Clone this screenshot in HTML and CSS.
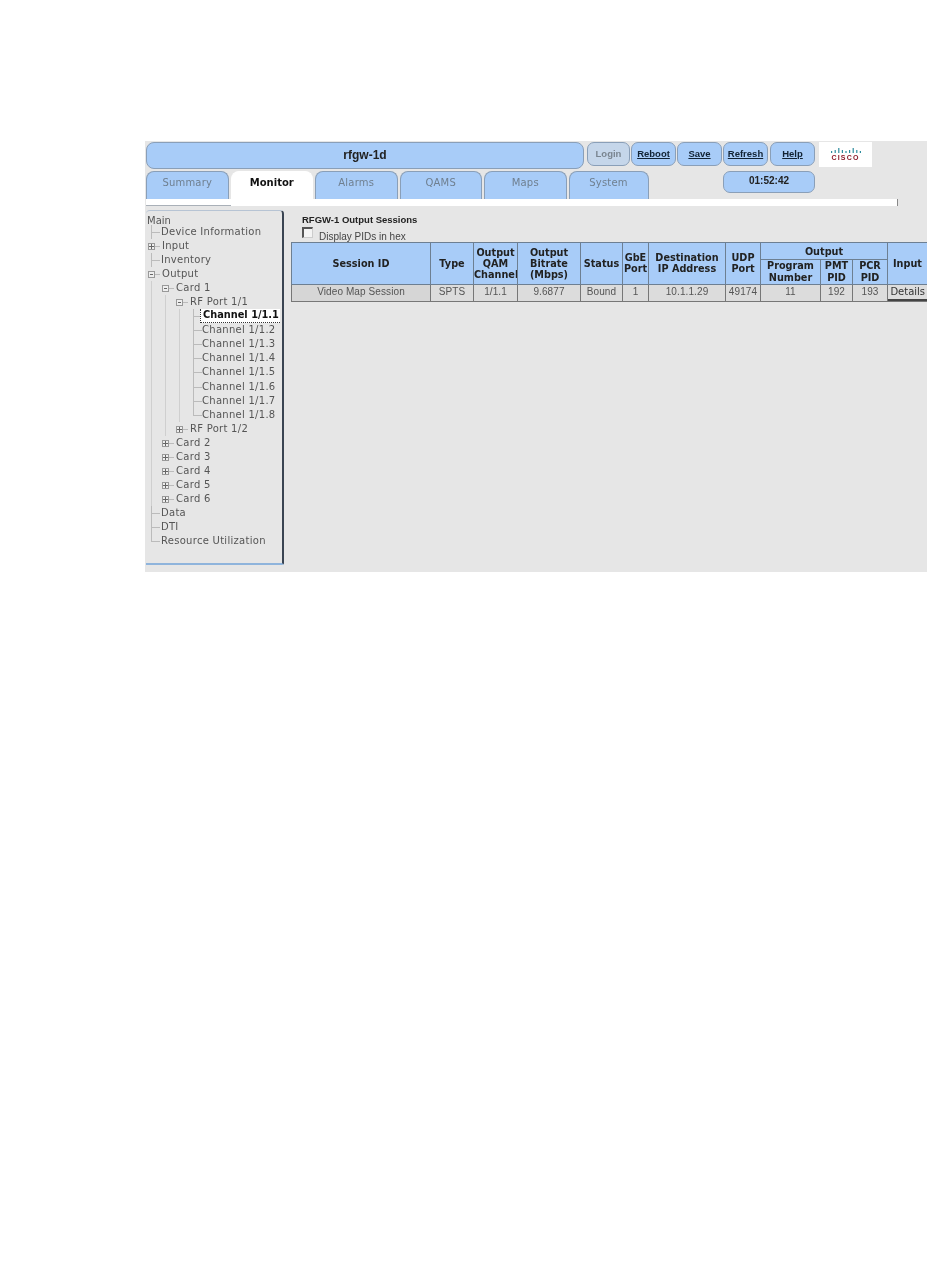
FILE: index.html
```html
<!DOCTYPE html>
<html>
<head>
<meta charset="utf-8">
<title>rfgw-1d</title>
<link rel="stylesheet" href="styles.css">
</head>
<body>
<div class="panel">
  <div class="top">
    <div class="title">rfgw-1d</div>
    <div class="btns">
      <a class="btn off">Login</a><a class="btn">Reboot</a><a class="btn">Save</a><a class="btn">Refresh</a><a class="btn">Help</a>
    </div>
    <div class="logo">
      <svg width="32" height="7" viewBox="0 0 32 7" class="bars">
        <g fill="#2d8c9e"><rect x="1" y="4" width="1.2" height="2"/><rect x="4.6" y="3" width="1.2" height="3"/><rect x="8.2" y="1" width="1.2" height="5"/><rect x="11.8" y="3" width="1.2" height="3"/><rect x="15.4" y="4" width="1.2" height="2"/><rect x="19" y="3" width="1.2" height="3"/><rect x="22.6" y="1" width="1.2" height="5"/><rect x="26.2" y="3" width="1.2" height="3"/><rect x="29.8" y="4" width="1.2" height="2"/></g>
      </svg>
      <span class="cisco">CISCO</span>
    </div>
  </div>
  <div class="second">
    <div class="tabs">
      <div class="tab">Summary</div><div class="tab on">Monitor</div><div class="tab">Alarms</div><div class="tab">QAMS</div><div class="tab">Maps</div><div class="tab sys">System</div>
    </div>
    <div class="clock">01:52:42</div>
  </div>
  <div class="strip"><div class="strip-white"></div><div class="tick"></div></div>
  <div class="main">
    <div class="tree">
      <div class="row first"><span class="t root">Main</span></div>
      <div class="row"><i class="e"></i><span class="t top-item">Device Information</span></div>
      <div class="row"><i class="p"></i><span class="t x">Input</span></div>
      <div class="row"><i class="e"></i><span class="t top-item">Inventory</span></div>
      <div class="row"><i class="m"></i><span class="t x">Output</span></div>
      <div class="row"><i class="g"></i><i class="m"></i><span class="t x">Card 1</span></div>
      <div class="row"><i class="g"></i><i class="g"></i><i class="m"></i><span class="t x">RF Port 1/1</span></div>
      <div class="row"><i class="g"></i><i class="g"></i><i class="g"></i><i class="e"></i><span class="t sel">Channel 1/1.1</span></div>
      <div class="row"><i class="g"></i><i class="g"></i><i class="g"></i><i class="e"></i><span class="t">Channel 1/1.2</span></div>
      <div class="row"><i class="g"></i><i class="g"></i><i class="g"></i><i class="e"></i><span class="t">Channel 1/1.3</span></div>
      <div class="row"><i class="g"></i><i class="g"></i><i class="g"></i><i class="e"></i><span class="t">Channel 1/1.4</span></div>
      <div class="row"><i class="g"></i><i class="g"></i><i class="g"></i><i class="e"></i><span class="t">Channel 1/1.5</span></div>
      <div class="row"><i class="g"></i><i class="g"></i><i class="g"></i><i class="e"></i><span class="t">Channel 1/1.6</span></div>
      <div class="row"><i class="g"></i><i class="g"></i><i class="g"></i><i class="e"></i><span class="t">Channel 1/1.7</span></div>
      <div class="row"><i class="g"></i><i class="g"></i><i class="g"></i><i class="l"></i><span class="t">Channel 1/1.8</span></div>
      <div class="row"><i class="g"></i><i class="g"></i><i class="p"></i><span class="t x">RF Port 1/2</span></div>
      <div class="row"><i class="g"></i><i class="p"></i><span class="t x">Card 2</span></div>
      <div class="row"><i class="g"></i><i class="p"></i><span class="t x">Card 3</span></div>
      <div class="row"><i class="g"></i><i class="p"></i><span class="t x">Card 4</span></div>
      <div class="row"><i class="g"></i><i class="p"></i><span class="t x">Card 5</span></div>
      <div class="row"><i class="g"></i><i class="p"></i><span class="t x">Card 6</span></div>
      <div class="row"><i class="e"></i><span class="t top-item">Data</span></div>
      <div class="row"><i class="e"></i><span class="t top-item">DTI</span></div>
      <div class="row"><i class="l"></i><span class="t top-item">Resource Utilization</span></div>
    </div>
    <div class="content">
      <div class="heading">RFGW-1 Output Sessions</div>
      <label class="hex"><span class="check"></span><span>Display PIDs in hex</span></label>
      <table class="sessions">
        <colgroup><col class="c1"><col class="c2"><col class="c3"><col class="c4"><col class="c5"><col class="c6"><col class="c7"><col class="c8"><col class="c9"><col class="c10"><col class="c11"><col class="c12"></colgroup>
        <thead>
          <tr class="h1">
            <th rowspan="2">Session ID</th><th rowspan="2">Type</th><th rowspan="2">Output<br>QAM<br>Channel</th><th rowspan="2">Output<br>Bitrate<br>(Mbps)</th><th rowspan="2">Status</th><th rowspan="2">GbE<br>Port</th><th rowspan="2">Destination<br>IP Address</th><th rowspan="2">UDP<br>Port</th><th class="group" colspan="3">Output</th><th rowspan="2">Input</th>
          </tr>
          <tr class="h2"><th>Program<br>Number</th><th>PMT<br>PID</th><th>PCR<br>PID</th></tr>
        </thead>
        <tbody>
          <tr><td>Video Map Session</td><td>SPTS</td><td>1/1.1</td><td>9.6877</td><td>Bound</td><td>1</td><td>10.1.1.29</td><td>49174</td><td>11</td><td>192</td><td>193</td><td class="det"><span class="details">Details</span></td></tr>
        </tbody>
      </table>
    </div>
  </div>
</div>
</body>
</html>
```
FILE: styles.css
```css
* { box-sizing: border-box; }
html, body { margin: 0; padding: 0; background: #fff; }
body { padding: 141px 0 0 145px; width: 950px; height: 1284px; overflow: hidden; }
.panel { width: 782px; height: 431px; background: #e6e6e6; overflow: hidden; font-family: "DejaVu Sans", sans-serif; color: #555; padding: 1px 0 0 1px; filter: blur(0.35px); }
.top { display: flex; height: 27px; }
.title { width: 438px; height: 27px; background: #a8ccf8; border: 1px solid #8a9fb8; border-radius: 8px; text-align: center; font: 700 12px/25px "Liberation Sans", sans-serif; color: #222; }
.btns { display: flex; margin-left: 3px; gap: 1px; height: 24px; }
.btn { width: 45px; background: #a8ccf8; border: 1px solid #8a9fb8; border-radius: 7px; text-align: center; font: 700 9.5px/22px "Liberation Sans", sans-serif; color: #123; text-decoration: underline; }
.btn.off { color: #7a8590; text-decoration: none; background: #c5d6ea; width: 43px; }
.btn:last-child { margin-left: 1px; }
.logo { margin-left: 4px; width: 53px; height: 25px; background: #fff; display: flex; flex-direction: column; align-items: center; padding-top: 5px; }
.bars { display: block; }
.cisco { font: 700 7px/8px "Liberation Sans", sans-serif; color: #8c1c2c; letter-spacing: 1.2px; }
.second { display: flex; margin-top: 2px; height: 28px; }
.tabs { display: flex; gap: 2px; width: 577px; }
.tab { width: 82.5px; height: 28px; background: #a8ccf8; border: 1px solid #8a9fb8; border-bottom: 0; border-radius: 8px 8px 0 0; text-align: center; font: 400 10px/21px "DejaVu Sans", sans-serif; letter-spacing: .2px; color: #6f7f8f; }
.tab.on { background: #fff; border-color: #fff; color: #111; font-weight: 700; letter-spacing: 0; }
.tab.sys { width: 80px; }
.clock { width: 92px; height: 22px; background: #a8ccf8; border: 1px solid #8a9fb8; border-radius: 7px; text-align: center; font: 700 10px/18px "Liberation Sans", sans-serif; color: #222; }
.strip { display: flex; height: 7px; }
.strip-white { width: 751px; background: linear-gradient(#a9b0b8, #a9b0b8) 0 100% / 85px 1px no-repeat, #fff; }
.tick { width: 1px; background: #888; }
.main { display: flex; margin-top: 4px; align-items: flex-start; }
.tree { width: 139px; height: 355px; border-top: 1px solid #b7c4d4; border-right: 2px solid #3a4452; border-bottom: 2px solid #8fb4dc; border-radius: 4px 4px 2px 0; padding-top: 4px; font-size: 10px; letter-spacing: .28px; }
.row { display: flex; height: 14.05px; line-height: 14px; white-space: nowrap; }
.row.first { height: 10px; line-height: 12px; }
.t { color: #555; }
.t.top-item { padding-left: 1px; }
.t.x { padding-left: 2px; }
.t.root { padding-left: 1px; letter-spacing: 0; }
.t.sel { font-weight: 700; color: #111; background: #fff; border-left: 1px dotted #333; border-bottom: 1px dotted #333; padding: 0 0 0 2px; margin-left: -2px; width: 80px; height: 14px; letter-spacing: 0; font-size: 9.8px; line-height: 12px; }
.row i { width: 14px; height: 100%; flex: none; display: block; }
.g { background: linear-gradient(#cfcfcf, #cfcfcf) 5px 0 / 1px 100% no-repeat; }
.e { background: linear-gradient(#bbb, #bbb) 5px 0 / 1px 100% no-repeat, linear-gradient(#bbb, #bbb) 5px 7px / 9px 1px no-repeat; }
.l { background: linear-gradient(#bbb, #bbb) 5px 0 / 1px 8px no-repeat, linear-gradient(#bbb, #bbb) 5px 7px / 9px 1px no-repeat; }
.m { background: linear-gradient(#666, #666) 4px 7px / 3px 1px no-repeat, linear-gradient(#eee, #eee) 3px 5px / 5px 5px no-repeat, linear-gradient(#999, #999) 2px 4px / 7px 7px no-repeat, linear-gradient(#bbb, #bbb) 9px 7px / 5px 1px no-repeat; }
.p { background: linear-gradient(#666, #666) 5px 5px / 1px 5px no-repeat, linear-gradient(#666, #666) 3px 7px / 5px 1px no-repeat, linear-gradient(#eee, #eee) 3px 5px / 5px 5px no-repeat, linear-gradient(#999, #999) 2px 4px / 7px 7px no-repeat, linear-gradient(#bbb, #bbb) 9px 7px / 5px 1px no-repeat; }
.content { width: 643px; padding: 4px 0 0 7px; }
.heading { font: 700 9.5px/11px "Liberation Sans", sans-serif; color: #222; padding-left: 11px; }
.hex { display: flex; align-items: flex-end; height: 15px; margin-top: 2px; padding-left: 11px; font: 400 10px/11px "Liberation Sans", sans-serif; color: #444; }
.check { width: 11px; height: 11px; background: #f4f4f4; border-top: 2px solid #555; border-left: 2px solid #555; border-right: 1px solid #ccc; border-bottom: 1px solid #ccc; margin: 0 6px 4px 0; }
.sessions { border-collapse: collapse; table-layout: fixed; width: 636px; }
.c1 { width: 139px; } .c2 { width: 43px; } .c3 { width: 44px; } .c4 { width: 63px; } .c5 { width: 42px; } .c6 { width: 26px; } .c7 { width: 77px; } .c8 { width: 35px; } .c9 { width: 60px; } .c10 { width: 32px; } .c11 { width: 35px; } .c12 { width: 40px; }
.sessions th { background: #a8ccf8; border: 1px solid #6d7f92; padding: 0 0 1px; text-align: center; font: 700 9.7px/11px "DejaVu Sans", sans-serif; color: #222; overflow: hidden; white-space: nowrap; }
.h1 th { height: 17px; }
.h1 th.group { padding: 0; }
.h2 th { height: 25px; padding: 0; line-height: 12px; }
.sessions td { height: 17px; background: #dcdcdc; border: 1px solid #777; padding: 0 0 3px; text-align: center; font: 400 10px/13px "Liberation Sans", sans-serif; letter-spacing: .1px; color: #555; overflow: hidden; white-space: nowrap; }
.sessions td:first-child { background: #d6d6d6; }
.sessions td.det { border-right: 0; background: #e4e4e4; padding: 0; }
.details { display: block; height: 16px; line-height: 14px; background: #ddd; border-bottom: 2px solid #444; color: #333; font-family: "DejaVu Sans", sans-serif; font-size: 10px; letter-spacing: 0; }
```
